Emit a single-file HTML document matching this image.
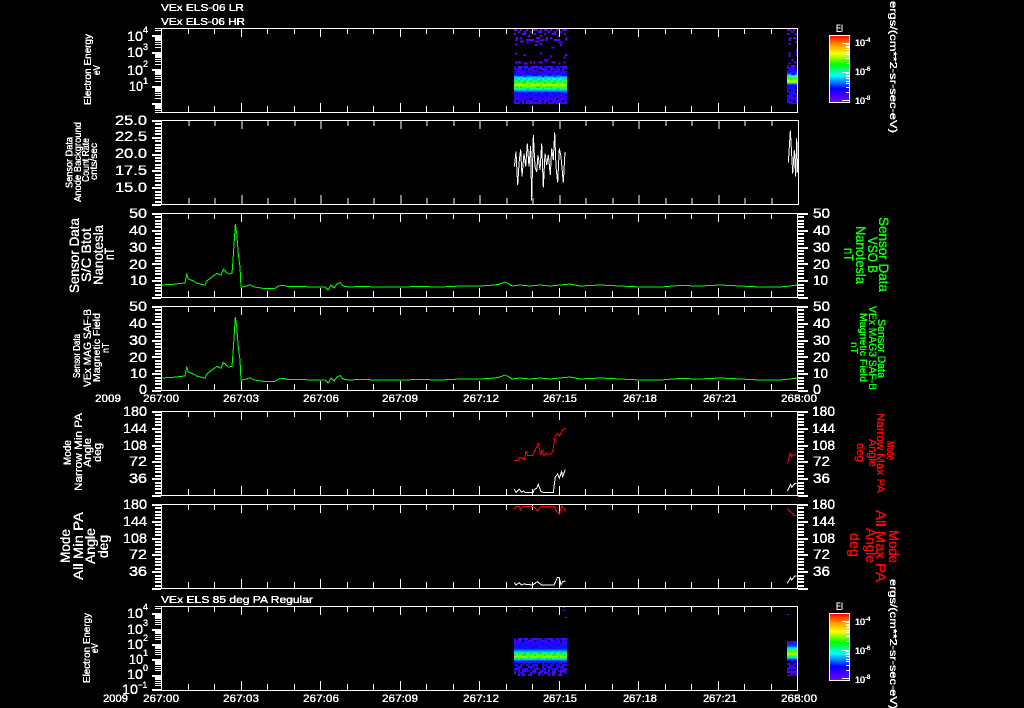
<!DOCTYPE html>
<html><head><meta charset="utf-8"><title>VEx ELS</title>
<style>
html,body{margin:0;padding:0;background:#000;width:1024px;height:708px;overflow:hidden}
svg{display:block}
text{font-family:"Liberation Sans",sans-serif;fill:#fff;stroke:#fff;stroke-width:.2}
.s{font-size:10px}.m{font-size:11px}.n{font-size:14px}.l{font-size:14px}.t{font-size:9px}.u{font-size:6px}
.g text{fill:#0f0;stroke:#0f0}.r text{fill:#f00;stroke:#f00}
</style></head><body>
<svg xmlns="http://www.w3.org/2000/svg" width="1024" height="708" viewBox="0 0 1024 708">
<defs>
<linearGradient id="rb" x1="0" y1="0" x2="0" y2="1">
<stop offset="0" stop-color="#ff0000"/><stop offset=".13" stop-color="#ff9000"/><stop offset=".27" stop-color="#ffff00"/><stop offset=".43" stop-color="#00ff00"/><stop offset=".6" stop-color="#00ffff"/><stop offset=".79" stop-color="#0000ff"/><stop offset="1" stop-color="#7f00ff"/>
</linearGradient>
<linearGradient id="g1" gradientUnits="userSpaceOnUse" x1="0" y1="66" x2="0" y2="104">
<stop offset="0" stop-color="#6000ff"/><stop offset=".2" stop-color="#3000ff"/><stop offset=".24" stop-color="#0020ff"/><stop offset=".27" stop-color="#0080ff"/><stop offset=".32" stop-color="#00f0ff"/><stop offset=".38" stop-color="#00ff80"/><stop offset=".44" stop-color="#40ff00"/><stop offset=".5" stop-color="#b0ff00"/><stop offset=".55" stop-color="#40ff00"/><stop offset=".6" stop-color="#00ffa0"/><stop offset=".64" stop-color="#00c0ff"/><stop offset=".69" stop-color="#0030ff"/><stop offset=".74" stop-color="#3000ff"/><stop offset="1" stop-color="#5000ff"/>
</linearGradient>
<linearGradient id="g2" gradientUnits="userSpaceOnUse" x1="0" y1="66" x2="0" y2="104">
<stop offset="0" stop-color="#6000ff"/><stop offset=".16" stop-color="#2000ff"/><stop offset=".21" stop-color="#0070ff"/><stop offset=".26" stop-color="#00ffe0"/><stop offset=".32" stop-color="#30ff00"/><stop offset=".4" stop-color="#c0ff00"/><stop offset=".45" stop-color="#30ff40"/><stop offset=".47" stop-color="#0080ff"/><stop offset=".5" stop-color="#2000ff"/><stop offset="1" stop-color="#5000ff"/>
</linearGradient>
<linearGradient id="g3" gradientUnits="userSpaceOnUse" x1="0" y1="638" x2="0" y2="676">
<stop offset="0" stop-color="#6000ff"/><stop offset=".16" stop-color="#3000ff"/><stop offset=".29" stop-color="#0020ff"/><stop offset=".34" stop-color="#00a0ff"/><stop offset=".39" stop-color="#00ff90"/><stop offset=".45" stop-color="#40ff00"/><stop offset=".5" stop-color="#90ff00"/><stop offset=".53" stop-color="#00ff60"/><stop offset=".57" stop-color="#00d0ff"/><stop offset=".6" stop-color="#0030ff"/><stop offset=".66" stop-color="#3000ff"/><stop offset="1" stop-color="#6000ff"/>
</linearGradient>
<linearGradient id="g4" gradientUnits="userSpaceOnUse" x1="0" y1="641" x2="0" y2="676">
<stop offset="0" stop-color="#3000ff"/><stop offset=".14" stop-color="#0040ff"/><stop offset=".2" stop-color="#00e0ff"/><stop offset=".29" stop-color="#40ff00"/><stop offset=".37" stop-color="#c0ff00"/><stop offset=".43" stop-color="#20ff40"/><stop offset=".49" stop-color="#00d0ff"/><stop offset=".54" stop-color="#2000ff"/><stop offset="1" stop-color="#6000ff"/>
</linearGradient>
<pattern id="pH" width="26" height="24" patternUnits="userSpaceOnUse"><path shape-rendering="crispEdges" fill="none" stroke="#000" stroke-width="2" d="M2 1h2M14 1h2M8 3h2M20 3h2M0 5h2M12 5h2M24 5h2M6 7h2M18 7h2M16 9h2M2 11h2M10 11h2M22 11h2M6 13h2M14 15h2M0 15h2M20 15h2M10 17h2M4 19h2M24 19h2M16 21h2M8 23h2M20 23h2"/></pattern>
<pattern id="pB" width="30" height="26" patternUnits="userSpaceOnUse"><path shape-rendering="crispEdges" fill="none" stroke="#0010ff" stroke-width="2" d="M0 1h4M8 1h2M14 1h4M24 1h2M2 3h2M10 3h4M20 3h6M6 5h4M16 5h2M26 5h4M0 7h2M12 7h4M22 7h2M4 9h4M18 9h6M10 11h2M28 11h2M0 13h4M14 13h2M20 13h4M6 15h4M26 15h2M16 17h4M2 19h2M10 19h4M24 19h4M6 21h2M18 21h2M0 23h2M12 23h6M26 23h2M4 25h4M22 25h2"/></pattern>
<pattern id="pS" width="30" height="12" patternUnits="userSpaceOnUse"><path shape-rendering="crispEdges" fill="none" stroke="#5a00ff" stroke-width="2" d="M0 1h4M6 1h2M12 1h2M18 1h6M26 1h2M4 3h2M10 3h2M16 3h2M24 3h4M0 5h2M8 5h4M20 5h2M14 7h2M26 7h2M2 9h2M6 9h2M22 9h4M12 11h4M28 11h2"/></pattern>
<pattern id="pK" width="30" height="12" patternUnits="userSpaceOnUse"><path shape-rendering="crispEdges" fill="none" stroke="#000" stroke-width="2" d="M0 1h4M6 1h2M12 1h2M18 1h6M26 1h2M4 3h2M10 3h2M16 3h2M24 3h4M0 5h2M8 5h4M20 5h2M14 7h2M26 7h2M2 9h2M6 9h2M22 9h4M12 11h4M28 11h2"/></pattern>
<path id="d1" fill="none" stroke="#fff" stroke-width="1" d="M155 -5h6M155 -8h6M155 -10h6M155 -12h6M155 -13h6M155 -14h6M155 -15h6M155 -16h6"/>
<path id="d2" fill="none" stroke="#fff" stroke-width="1" d="M155 -5h6M155 -7h6M155 -9h6M155 -11h6M155 -12h6M155 -13h6M155 -14h6"/>
<path id="xt" fill="none" stroke="#fff" stroke-width="1" d="M27.5 0v6M53.5 0v6M80.5 0v9M106.5 0v6M133.5 0v6M159.5 0v9M186.5 0v6M212.5 0v6M239.5 0v9M265.5 0v6M292.5 0v6M318.5 0v9M345.5 0v6M371.5 0v6M398.5 0v9M424.5 0v6M451.5 0v6M477.5 0v9M504.5 0v6M530.5 0v6M557.5 0v9M583.5 0v6M610.5 0v6"/>
<path id="xb" fill="none" stroke="#fff" stroke-width="1" d="M27.5 0v-6M53.5 0v-6M80.5 0v-9M106.5 0v-6M133.5 0v-6M159.5 0v-9M186.5 0v-6M212.5 0v-6M239.5 0v-9M265.5 0v-6M292.5 0v-6M318.5 0v-9M345.5 0v-6M371.5 0v-6M398.5 0v-9M424.5 0v-6M451.5 0v-6M477.5 0v-9M504.5 0v-6M530.5 0v-6M557.5 0v-9M583.5 0v-6M610.5 0v-6"/>
<path id="yl" fill="none" stroke="#fff" stroke-width="2" d="M152 1h9M155 4h6M155 8h6M155 11h6M155 14h6M152 18h9M155 21h6M155 25h6M155 28h6M155 31h6M152 35h9M155 38h6M155 41h6M155 45h6M155 48h6M152 51h9M155 55h6M155 58h6M155 61h6M155 65h6M152 68h9M155 72h6M155 75h6M155 78h6M155 82h6M152 85h9"/>
<path id="yr" fill="none" stroke="#fff" stroke-width="2" d="M798 1h10M798 4h6M798 8h6M798 11h6M798 14h6M798 18h10M798 21h6M798 25h6M798 28h6M798 31h6M798 35h10M798 38h6M798 41h6M798 45h6M798 48h6M798 51h10M798 55h6M798 58h6M798 61h6M798 65h6M798 68h10M798 72h6M798 75h6M798 78h6M798 82h6M798 85h10"/>
<filter id="hard" x="0" y="0" width="1024" height="708" filterUnits="userSpaceOnUse" color-interpolation-filters="sRGB"><feComponentTransfer><feFuncA type="discrete" tableValues="0 1 1"/></feComponentTransfer></filter>
</defs>
<rect width="1024" height="708" fill="#000"/>

<!-- spectrograms -->
<g shape-rendering="crispEdges">
<!-- panel 1 main -->
<g transform="translate(514 29)"><rect width="53" height="12" fill="url(#pS)"/></g>
<g transform="translate(480 20) scale(.33333)"><path fill="none" stroke="#5a00ff" stroke-width="6" d="M105 60h6M150 60h12M195 60h6M222 60h18M255 58h6M105 73h6M120 65h12M140 68h6M165 65h12M180 62h6M235 68h12M165 75h6M180 72h6M215 82h6M240 75h6M105 100h6M130 105h6M180 100h6M210 110h6M255 105h6M200 118h6M192 120h6M250 112h6M105 128h18M130 131h12M150 128h6M160 128h6M175 128h12M195 124h6M215 128h12M235 130h6M250 128h6"/></g>
<rect x="514" y="66" width="53" height="38" fill="url(#g1)"/>
<g transform="translate(514 66)"><rect width="53" height="11" fill="url(#pB)"/><rect width="53" height="5" fill="url(#pH)"/><rect y="11" width="53" height="14" fill="url(#pK)" opacity=".12"/><rect y="26" width="53" height="12" fill="url(#pB)"/><rect y="32" width="53" height="6" fill="url(#pH)"/></g>
<!-- panel 1 right -->
<g transform="translate(787 29)"><rect width="10" height="12" fill="url(#pS)"/></g>
<g transform="translate(480 20) scale(.33333)"><path fill="none" stroke="#5a00ff" stroke-width="6" d="M925 72h6M945 66h6M925 100h6M948 90h6M925 108h6M948 105h6M935 120h6M925 130h6M940 128h12M948 98h6M925 60h6M940 56h12"/></g>
<rect x="787" y="65" width="10" height="39" fill="url(#g2)"/>
<g transform="translate(787 65)"><rect width="10" height="10" fill="url(#pB)"/><rect width="10" height="5" fill="url(#pH)"/><rect y="21" width="10" height="18" fill="url(#pB)"/><rect y="21" width="10" height="18" fill="url(#pH)"/></g>
<!-- panel 7 main -->
<rect x="514" y="638" width="53" height="38" fill="url(#g3)"/>
<g transform="translate(514 638)"><rect width="53" height="11" fill="url(#pB)"/><rect width="53" height="4" fill="url(#pH)"/><rect y="13" width="53" height="10" fill="url(#pK)" opacity=".12"/><rect y="24" width="53" height="14" fill="url(#pB)"/><rect y="25" width="53" height="13" fill="url(#pK)"/><rect y="28" width="53" height="10" fill="url(#pH)"/></g>
<!-- panel 7 right -->
<rect x="787" y="641" width="10" height="35" fill="url(#g4)"/>
<g transform="translate(787 661)"><rect width="10" height="15" fill="url(#pB)"/><rect width="10" height="15" fill="url(#pK)"/></g>
<path fill="none" stroke="#5a00ff" stroke-width="1" d="M519 609.5h2M558 607.5h2M563 607.5h2M563 610.5h2M565 617.5h2M787 614.5h2"/>
</g>

<!-- axes -->
<g shape-rendering="crispEdges" fill="none" stroke="#fff">
<rect x="161.5" y="28.5" width="636" height="84"/>
<rect x="161.5" y="120.5" width="637" height="84"/>
<rect x="161.5" y="213.5" width="636" height="84"/>
<rect x="161.5" y="306.5" width="636" height="84"/>
<rect x="161.5" y="411.5" width="636" height="84"/>
<rect x="161.5" y="504.5" width="636" height="84"/>
<rect x="161.5" y="606.5" width="636" height="84"/>
<!-- x ticks -->
<use href="#xt" x="161" y="28"/><use href="#xb" x="161" y="112"/>
<use href="#xt" x="161.5" y="120"/><use href="#xb" x="161.5" y="204"/>
<use href="#xt" x="161" y="213"/><use href="#xb" x="161" y="297"/>
<use href="#xt" x="161" y="306"/><use href="#xb" x="161" y="390"/>
<use href="#xt" x="161" y="411"/><use href="#xb" x="161" y="495"/>
<use href="#xt" x="161" y="504"/><use href="#xb" x="161" y="588"/>
<use href="#xt" x="161" y="606"/><use href="#xb" x="161" y="690"/>
<!-- y ticks -->
<use href="#yl" y="120"/>
<use href="#yl" y="213"/><use href="#yr" y="213"/>
<use href="#yl" y="306"/><use href="#yr" y="306"/>
<use href="#yl" y="411"/><use href="#yr" y="411"/>
<use href="#yl" y="504"/><use href="#yr" y="504"/>
<!-- log ticks panel 1 -->
<path stroke-width="1" d="M155 28.5h6M155 30.5h6M155 112.5h6M155 110.5h6M155 108.5h6M155 107.5h6M155 106.5h6M155 105.5h6M155 104.5h6"/>
<use href="#d1" y="52.5"/><use href="#d1" y="69.5"/><use href="#d1" y="86.5"/><use href="#d1" y="103.5"/>
<path stroke-width="2" d="M152 36h9M152 53h9M152 70h9M152 87h9M152 104h9"/>
<!-- log ticks panel 7 -->
<path stroke-width="1" d="M155 606.5h6M155 608.5h6M155 690.5h6"/>
<use href="#d2" y="629.5"/><use href="#d2" y="644.5"/><use href="#d2" y="659.5"/><use href="#d2" y="675.5"/><use href="#d2" y="690.5"/>
<path stroke-width="2" d="M152 614h9M152 630h9M152 645h9M152 660h9M152 676h9M152 690h9"/>
</g>

<!-- colourbars -->
<rect x="829.5" y="35.5" width="20" height="67" fill="url(#rb)" stroke="#fff" stroke-width="1" shape-rendering="crispEdges"/>
<rect x="829.5" y="613.5" width="20" height="67" fill="url(#rb)" stroke="#fff" stroke-width="1" shape-rendering="crispEdges"/>
<g shape-rendering="crispEdges" fill="none" stroke="#fff" stroke-width="1">
<path d="M842 43.5h8M846 44.5h4M846 46.5h4M846 47.5h4M846 49.5h4M846 52.5h4M846 54.5h4M846 58.5h4M846 63.5h4M842 72.5h8M846 73.5h4M846 75.5h4M846 76.5h4M846 78.5h4M846 81.5h4M846 83.5h4M846 87.5h4M846 92.5h4M842 100.5h8"/>
<path d="M842 621.5h8M846 622.5h4M846 624.5h4M846 625.5h4M846 627.5h4M846 630.5h4M846 632.5h4M846 636.5h4M846 641.5h4M842 650.5h8M846 651.5h4M846 653.5h4M846 654.5h4M846 656.5h4M846 659.5h4M846 661.5h4M846 665.5h4M846 670.5h4M842 678.5h8"/>
</g>

<!-- traces -->
<g fill="none" stroke-linejoin="miter" shape-rendering="crispEdges">
<g stroke="#fff" stroke-width="3" transform="translate(480 20) scale(.33333)">
<polyline points="103,440 108,395 113,495 118,420 122,388 126,470 132,400 137,440 142,370 147,440 152,378 155,542 160,345 165,440 170,455 174,405 180,450 185,370 190,503 195,400 200,435 205,405 211,465 215,385 220,420 224,337 228,440 233,488 238,385 243,410 250,488 255,396"/>
<polyline points="925,428 931,332 936,420 938,460 943,390 947,470 950,355 953,458"/>
</g>
<polyline stroke="#0f0" stroke-width="1" points="161.7,285 173,284.3 185,283 186.7,274.3 188.3,279 193.3,281 196.7,283 205,285.3 206.7,281 216.7,273.3 221,275.3 223.3,269.3 228.3,274 232,273.3 232.7,264.3 234,245 235.3,224.3 236.7,233.3 238.3,254.3 240,266.7 241,287.3 246.7,286 250,284.7 253.3,286.7 263,288.3 275,288.3 278.3,286 283.3,285.3 286.7,286.3 300,286.3 310,287 320,287 325,287 328,290 331,285 334,288 337,284 340,282.5 343,286 348,287 360,286.5 380,287 400,287 420,286.5 440,287 460,286 480,286 495,285 500,284 505,282 509,284 512,286 520,285 530,286 540,285 550,286 560,285 570,284 580,286 600,285 620,286 640,287 660,287 680,285.5 700,286 720,285 740,286 760,287 780,287 790,286 797,285"/>
<polyline transform="translate(0 93)" stroke="#0f0" stroke-width="1" points="161.7,285 173,284.3 185,283 186.7,274.3 188.3,279 193.3,281 196.7,283 205,285.3 206.7,281 216.7,273.3 221,275.3 223.3,269.3 228.3,274 232,273.3 232.7,264.3 234,245 235.3,224.3 236.7,233.3 238.3,254.3 240,266.7 241,287.3 246.7,286 250,284.7 253.3,286.7 263,288.3 275,288.3 278.3,286 283.3,285.3 286.7,286.3 300,286.3 310,287 320,287 325,287 328,290 331,285 334,288 337,284 340,282.5 343,286 348,287 360,286.5 380,287 400,287 420,286.5 440,287 460,286 480,286 495,285 500,284 505,282 509,284 512,286 520,285 530,286 540,285 550,286 560,285 570,284 580,286 600,285 620,286 640,287 660,287 680,285.5 700,286 720,285 740,286 760,287 780,287 790,286 797,285"/>
<g transform="translate(480 405) scale(.33333)" stroke-width="3">
<g stroke="#f00">
<polyline points="103,166 115,166 118,157 125,158 133,165 138,137 143,152 158,152 163,140 175,115 182,150 186,135 192,152 198,143 204,150 215,145 220,130 225,93 232,85 238,93 245,80 250,72 257,70"/>
<polyline points="923,175 930,145 935,155 937,150 950,150"/>
<polyline points="103,313 107,304 118,304 122,315 128,304 158,304 165,308 172,318 182,304 222,304 230,320 238,328 245,304 252,310 257,320"/>
<polyline points="922,310 930,320 935,322 942,332 950,332"/>
</g>
<g stroke="#fff">
<polyline points="103,253 108,262 118,253 125,262 130,258 135,262 160,262 163,253 170,250 175,238 183,260 190,262 220,262 226,215 233,207 238,220 245,200 248,215 256,193"/>
<polyline points="922,258 932,238 935,247 945,235 950,235"/>
<polyline points="103,533 108,540 118,533 125,540 130,537 158,540 165,535 172,530 185,540 222,540 232,518 238,518 243,540 248,530 256,528"/>
<polyline points="922,535 932,518 935,525 945,513 950,513"/>
</g>
</g>
</g>

<g filter="url(#hard)">
<!-- titles -->
<text class="s" x="161" y="11" textLength="83" lengthAdjust="spacingAndGlyphs">VEx ELS-06 LR</text>
<text class="s" x="161" y="25" textLength="84" lengthAdjust="spacingAndGlyphs">VEx ELS-06 HR</text>
<text class="s" x="161" y="603" textLength="152" lengthAdjust="spacingAndGlyphs">VEx ELS 85 deg PA Regular</text>

<!-- panel 1 y labels -->
<text class="n" x="127" y="41" textLength="16" lengthAdjust="spacingAndGlyphs">10</text><text class="t" x="143" y="33">4</text>
<text class="n" x="127" y="57" textLength="16" lengthAdjust="spacingAndGlyphs">10</text><text class="t" x="143" y="50">3</text>
<text class="n" x="127" y="75" textLength="16" lengthAdjust="spacingAndGlyphs">10</text><text class="t" x="143" y="67">2</text>
<text class="n" x="129" y="91" textLength="14" lengthAdjust="spacingAndGlyphs">10</text><text class="t" x="143" y="84">1</text>
<!-- panel 2 -->
<text class="n" x="115" y="125" textLength="32" lengthAdjust="spacingAndGlyphs">25.0</text>
<text class="n" x="115" y="141" textLength="32" lengthAdjust="spacingAndGlyphs">22.5</text>
<text class="n" x="115" y="158" textLength="32" lengthAdjust="spacingAndGlyphs">20.0</text>
<text class="n" x="115" y="175" textLength="32" lengthAdjust="spacingAndGlyphs">17.5</text>
<text class="n" x="115" y="192" textLength="32" lengthAdjust="spacingAndGlyphs">15.0</text>
<!-- panel 3 left -->
<text class="n" x="129" y="218" textLength="18" lengthAdjust="spacingAndGlyphs">50</text>
<text class="n" x="129" y="235" textLength="18" lengthAdjust="spacingAndGlyphs">40</text>
<text class="n" x="129" y="252" textLength="18" lengthAdjust="spacingAndGlyphs">30</text>
<text class="n" x="129" y="269" textLength="18" lengthAdjust="spacingAndGlyphs">20</text>
<text class="n" x="130" y="285" textLength="17" lengthAdjust="spacingAndGlyphs">10</text>
<!-- panel 4 left -->
<text class="n" x="129" y="311" textLength="18" lengthAdjust="spacingAndGlyphs">50</text>
<text class="n" x="129" y="328" textLength="18" lengthAdjust="spacingAndGlyphs">40</text>
<text class="n" x="129" y="345" textLength="18" lengthAdjust="spacingAndGlyphs">30</text>
<text class="n" x="129" y="362" textLength="18" lengthAdjust="spacingAndGlyphs">20</text>
<text class="n" x="130" y="378" textLength="17" lengthAdjust="spacingAndGlyphs">10</text>
<text class="n" x="139" y="394" textLength="8" lengthAdjust="spacingAndGlyphs">0</text>
<!-- panel 5 left -->
<text class="n" x="123" y="416" textLength="24" lengthAdjust="spacingAndGlyphs">180</text>
<text class="n" x="123" y="433" textLength="24" lengthAdjust="spacingAndGlyphs">144</text>
<text class="n" x="123" y="450" textLength="24" lengthAdjust="spacingAndGlyphs">108</text>
<text class="n" x="129" y="466" textLength="18" lengthAdjust="spacingAndGlyphs">72</text>
<text class="n" x="129" y="483" textLength="18" lengthAdjust="spacingAndGlyphs">36</text>
<!-- panel 6 left -->
<text class="n" x="123" y="509" textLength="24" lengthAdjust="spacingAndGlyphs">180</text>
<text class="n" x="123" y="526" textLength="24" lengthAdjust="spacingAndGlyphs">144</text>
<text class="n" x="123" y="543" textLength="24" lengthAdjust="spacingAndGlyphs">108</text>
<text class="n" x="129" y="559" textLength="18" lengthAdjust="spacingAndGlyphs">72</text>
<text class="n" x="129" y="576" textLength="18" lengthAdjust="spacingAndGlyphs">36</text>
<!-- panel 7 left -->
<text class="n" x="127" y="618" textLength="16" lengthAdjust="spacingAndGlyphs">10</text><text class="t" x="143" y="610">4</text>
<text class="n" x="127" y="634" textLength="16" lengthAdjust="spacingAndGlyphs">10</text><text class="t" x="143" y="626">3</text>
<text class="n" x="127" y="649" textLength="16" lengthAdjust="spacingAndGlyphs">10</text><text class="t" x="143" y="641">2</text>
<text class="n" x="129" y="664" textLength="14" lengthAdjust="spacingAndGlyphs">10</text><text class="t" x="143" y="656">1</text>
<text class="n" x="127" y="679" textLength="16" lengthAdjust="spacingAndGlyphs">10</text><text class="t" x="143" y="671">0</text>
<text class="n" x="122" y="694" textLength="16" lengthAdjust="spacingAndGlyphs">10</text><text class="t" x="138" y="688" textLength="9" lengthAdjust="spacingAndGlyphs">−1</text>

<!-- right tick labels -->
<text class="n" x="813" y="218" textLength="17" lengthAdjust="spacingAndGlyphs">50</text>
<text class="n" x="813" y="235" textLength="17" lengthAdjust="spacingAndGlyphs">40</text>
<text class="n" x="813" y="252" textLength="17" lengthAdjust="spacingAndGlyphs">30</text>
<text class="n" x="813" y="269" textLength="17" lengthAdjust="spacingAndGlyphs">20</text>
<text class="n" x="813" y="285" textLength="15" lengthAdjust="spacingAndGlyphs">10</text>
<text class="n" x="813" y="311" textLength="17" lengthAdjust="spacingAndGlyphs">50</text>
<text class="n" x="813" y="328" textLength="17" lengthAdjust="spacingAndGlyphs">40</text>
<text class="n" x="813" y="345" textLength="17" lengthAdjust="spacingAndGlyphs">30</text>
<text class="n" x="813" y="362" textLength="17" lengthAdjust="spacingAndGlyphs">20</text>
<text class="n" x="813" y="378" textLength="15" lengthAdjust="spacingAndGlyphs">10</text>
<text class="n" x="813" y="394" textLength="8" lengthAdjust="spacingAndGlyphs">0</text>
<text class="n" x="812" y="416" textLength="23" lengthAdjust="spacingAndGlyphs">180</text>
<text class="n" x="812" y="433" textLength="23" lengthAdjust="spacingAndGlyphs">144</text>
<text class="n" x="812" y="450" textLength="23" lengthAdjust="spacingAndGlyphs">108</text>
<text class="n" x="813" y="466" textLength="17" lengthAdjust="spacingAndGlyphs">72</text>
<text class="n" x="813" y="483" textLength="17" lengthAdjust="spacingAndGlyphs">36</text>
<text class="n" x="812" y="509" textLength="23" lengthAdjust="spacingAndGlyphs">180</text>
<text class="n" x="812" y="526" textLength="23" lengthAdjust="spacingAndGlyphs">144</text>
<text class="n" x="812" y="543" textLength="23" lengthAdjust="spacingAndGlyphs">108</text>
<text class="n" x="813" y="559" textLength="17" lengthAdjust="spacingAndGlyphs">72</text>
<text class="n" x="813" y="576" textLength="17" lengthAdjust="spacingAndGlyphs">36</text>

<!-- x axis labels row 1 -->
<text class="m" x="95" y="402" textLength="26" lengthAdjust="spacingAndGlyphs">2009</text>
<text class="m" x="143" y="402" textLength="36" lengthAdjust="spacingAndGlyphs">267:00</text>
<text class="m" x="223" y="402" textLength="36" lengthAdjust="spacingAndGlyphs">267:03</text>
<text class="m" x="303" y="402" textLength="36" lengthAdjust="spacingAndGlyphs">267:06</text>
<text class="m" x="382" y="402" textLength="36" lengthAdjust="spacingAndGlyphs">267:09</text>
<text class="m" x="463" y="402" textLength="36" lengthAdjust="spacingAndGlyphs">267:12</text>
<text class="m" x="543" y="402" textLength="34" lengthAdjust="spacingAndGlyphs">267:15</text>
<text class="m" x="623" y="402" textLength="34" lengthAdjust="spacingAndGlyphs">267:18</text>
<text class="m" x="703" y="402" textLength="34" lengthAdjust="spacingAndGlyphs">267:21</text>
<text class="m" x="781" y="402" textLength="36" lengthAdjust="spacingAndGlyphs">268:00</text>
<!-- x axis labels row 2 -->
<text class="m" x="103" y="702" textLength="25" lengthAdjust="spacingAndGlyphs">2009</text>
<text class="m" x="143" y="702" textLength="36" lengthAdjust="spacingAndGlyphs">267:00</text>
<text class="m" x="223" y="702" textLength="36" lengthAdjust="spacingAndGlyphs">267:03</text>
<text class="m" x="303" y="702" textLength="36" lengthAdjust="spacingAndGlyphs">267:06</text>
<text class="m" x="382" y="702" textLength="36" lengthAdjust="spacingAndGlyphs">267:09</text>
<text class="m" x="463" y="702" textLength="36" lengthAdjust="spacingAndGlyphs">267:12</text>
<text class="m" x="543" y="702" textLength="34" lengthAdjust="spacingAndGlyphs">267:15</text>
<text class="m" x="623" y="702" textLength="34" lengthAdjust="spacingAndGlyphs">267:18</text>
<text class="m" x="703" y="702" textLength="34" lengthAdjust="spacingAndGlyphs">267:21</text>
<text class="m" x="781" y="702" textLength="36" lengthAdjust="spacingAndGlyphs">268:00</text>

<!-- left rotated labels -->
<text class="s" transform="translate(91 105) rotate(-90)" textLength="71" lengthAdjust="spacingAndGlyphs">Electron Energy</text>
<text class="s" transform="translate(100 75) rotate(-90)" textLength="10" lengthAdjust="spacingAndGlyphs">eV</text>

<text class="s" transform="translate(72.5 188) rotate(-90)" textLength="51" lengthAdjust="spacingAndGlyphs">Sensor Data</text>
<text class="s" transform="translate(81 202) rotate(-90)" textLength="80" lengthAdjust="spacingAndGlyphs">Anode Background</text>
<text class="s" transform="translate(89 182) rotate(-90)" textLength="44" lengthAdjust="spacingAndGlyphs">Count Rate</text>
<text class="s" transform="translate(97 180) rotate(-90)" textLength="37" lengthAdjust="spacingAndGlyphs">cnts/sec</text>

<text class="l" transform="translate(79 293) rotate(-90)" textLength="75" lengthAdjust="spacingAndGlyphs">Sensor Data</text>
<text class="l" transform="translate(91 282) rotate(-90)" textLength="54" lengthAdjust="spacingAndGlyphs">S/C Btot</text>
<text class="l" transform="translate(103 285) rotate(-90)" textLength="60" lengthAdjust="spacingAndGlyphs">Nanotesla</text>
<text class="l" transform="translate(114 260) rotate(-90)" textLength="12" lengthAdjust="spacingAndGlyphs">nT</text>

<text class="s" transform="translate(80 378) rotate(-90)" textLength="44" lengthAdjust="spacingAndGlyphs">Sensor Data</text>
<text class="m" transform="translate(91 387) rotate(-90)" textLength="78" lengthAdjust="spacingAndGlyphs">VEx MAG SAF-B</text>
<text class="s" transform="translate(100 382) rotate(-90)" textLength="69" lengthAdjust="spacingAndGlyphs">Magnetic Field</text>
<text class="s" transform="translate(109 353) rotate(-90)" textLength="10" lengthAdjust="spacingAndGlyphs">nT</text>

<text class="m" transform="translate(71 465) rotate(-90)" textLength="25" lengthAdjust="spacingAndGlyphs">Mode</text>
<text class="m" transform="translate(82 491) rotate(-90)" textLength="78" lengthAdjust="spacingAndGlyphs">Narrow Min PA</text>
<text class="m" transform="translate(91 467) rotate(-90)" textLength="29" lengthAdjust="spacingAndGlyphs">Angle</text>
<text class="m" transform="translate(101 462) rotate(-90)" textLength="19" lengthAdjust="spacingAndGlyphs">deg</text>

<text class="l" transform="translate(70 563) rotate(-90)" textLength="34" lengthAdjust="spacingAndGlyphs">Mode</text>
<text class="l" transform="translate(83 580) rotate(-90)" textLength="68" lengthAdjust="spacingAndGlyphs">All Min PA</text>
<text class="l" transform="translate(95 564) rotate(-90)" textLength="36" lengthAdjust="spacingAndGlyphs">Angle</text>
<text class="l" transform="translate(108 558) rotate(-90)" textLength="23" lengthAdjust="spacingAndGlyphs">deg</text>

<text class="s" transform="translate(90 683) rotate(-90)" textLength="70" lengthAdjust="spacingAndGlyphs">Electron Energy</text>
<text class="s" transform="translate(98 653) rotate(-90)" textLength="10" lengthAdjust="spacingAndGlyphs">eV</text>

<!-- right rotated green -->
<g class="g">
<text class="l" transform="translate(879 217) rotate(90)" textLength="75" lengthAdjust="spacingAndGlyphs">Sensor Data</text>
<text class="l" transform="translate(868 237) rotate(90)" textLength="36" lengthAdjust="spacingAndGlyphs">VSO B</text>
<text class="l" transform="translate(856 226) rotate(90)" textLength="58" lengthAdjust="spacingAndGlyphs">Nanotesla</text>
<text class="l" transform="translate(844 248) rotate(90)" textLength="13" lengthAdjust="spacingAndGlyphs">nT</text>
<text class="m" transform="translate(878 319) rotate(90)" textLength="59" lengthAdjust="spacingAndGlyphs">Sensor Data</text>
<text class="m" transform="translate(869 306) rotate(90)" textLength="84" lengthAdjust="spacingAndGlyphs">VEx MAG3 SAF-B</text>
<text class="s" transform="translate(860 313) rotate(90)" textLength="69" lengthAdjust="spacingAndGlyphs">Magnetic Field</text>
<text class="s" transform="translate(851 342) rotate(90)" textLength="12" lengthAdjust="spacingAndGlyphs">nT</text>
</g>
<!-- right rotated red -->
<g class="r">
<text class="m" transform="translate(887 441) rotate(90)" textLength="19" lengthAdjust="spacingAndGlyphs">Mode</text>
<text class="m" transform="translate(877 413) rotate(90)" textLength="80" lengthAdjust="spacingAndGlyphs">Narrow Max PA</text>
<text class="m" transform="translate(869 439) rotate(90)" textLength="28" lengthAdjust="spacingAndGlyphs">Angle</text>
<text class="m" transform="translate(857 443) rotate(90)" textLength="19" lengthAdjust="spacingAndGlyphs">deg</text>
<text class="l" transform="translate(889 530) rotate(90)" textLength="33" lengthAdjust="spacingAndGlyphs">Mode</text>
<text class="l" transform="translate(876 510) rotate(90)" textLength="72" lengthAdjust="spacingAndGlyphs">All Max PA</text>
<text class="l" transform="translate(866 528) rotate(90)" textLength="35" lengthAdjust="spacingAndGlyphs">Angle</text>
<text class="l" transform="translate(850 533) rotate(90)" textLength="24" lengthAdjust="spacingAndGlyphs">deg</text>
</g>

<!-- units -->
<text class="s" transform="translate(890 1) rotate(90)" textLength="132" lengthAdjust="spacingAndGlyphs">ergs/(cm**2-sr-sec-eV)</text>
<text class="s" transform="translate(890 579) rotate(90)" textLength="130" lengthAdjust="spacingAndGlyphs">ergs/(cm**2-sr-sec-eV)</text>

<!-- colourbar labels -->
<text class="m" x="836" y="32" textLength="7" lengthAdjust="spacingAndGlyphs">EI</text>
<text class="t" x="855" y="46">10</text><text class="u" x="865" y="42">-4</text>
<text class="t" x="855" y="75">10</text><text class="u" x="865" y="71">-6</text>
<text class="t" x="855" y="104">10</text><text class="u" x="865" y="100">-8</text>
<text class="m" x="836" y="610" textLength="7" lengthAdjust="spacingAndGlyphs">EI</text>
<text class="t" x="855" y="625">10</text><text class="u" x="865" y="621">-4</text>
<text class="t" x="855" y="654">10</text><text class="u" x="865" y="650">-6</text>
<text class="t" x="855" y="683">10</text><text class="u" x="865" y="679">-8</text>
</g>
</svg>
</body></html>
